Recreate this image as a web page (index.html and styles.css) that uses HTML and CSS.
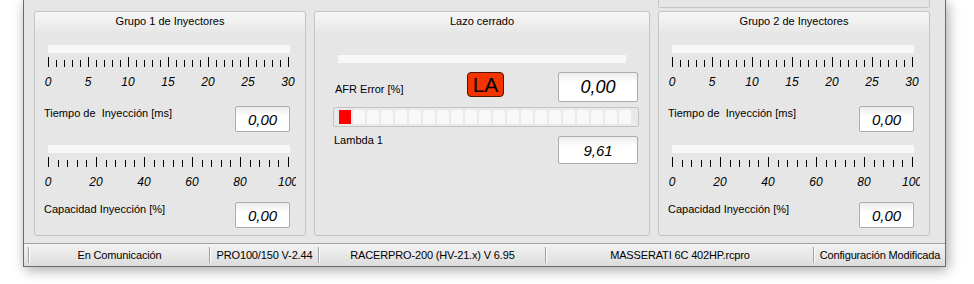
FILE: index.html
```html
<!DOCTYPE html>
<html lang="es">
<head>
<meta charset="utf-8">
<title>Inyección</title>
<link rel="stylesheet" href="styles.css">
</head>
<body>
<div class="window">
  <div class="topstrip"><div class="topbox"></div></div>
  <div class="groups">
    <section class="group">
      <div class="gtitle">Grupo 1 de Inyectores</div>
      <div class="gauge">
        <div class="gbar"></div>
        <svg class="ticks" width="241" height="10" viewBox="0 0 241 10">
          <path d="M8.5 3v7M16.5 3v7M24.5 3v7M32.5 3v7M48.5 3v7M56.5 3v7M64.5 3v7M72.5 3v7M88.5 3v7M96.5 3v7M104.5 3v7M112.5 3v7M128.5 3v7M136.5 3v7M144.5 3v7M152.5 3v7M168.5 3v7M176.5 3v7M184.5 3v7M192.5 3v7M208.5 3v7M216.5 3v7M224.5 3v7M232.5 3v7M0.5 0v10M40.5 0v10M80.5 0v10M120.5 0v10M160.5 0v10M200.5 0v10M240.5 0v10"/>
        </svg>
        <div class="scale s30"><span>0</span><span>5</span><span>10</span><span>15</span><span>20</span><span>25</span><span>30</span></div>
      </div>
      <div class="vrow"><span class="vlabel">Tiempo de&nbsp; Inyección [ms]</span><div class="vbox">0,00</div></div>
      <div class="gauge second">
        <div class="gbar"></div>
        <svg class="ticks" width="241" height="10" viewBox="0 0 241 10">
          <path d="M10.5 3v7M19.5 3v7M29.5 3v7M38.5 3v7M58.5 3v7M67.5 3v7M77.5 3v7M86.5 3v7M106.5 3v7M115.5 3v7M125.5 3v7M134.5 3v7M154.5 3v7M163.5 3v7M173.5 3v7M182.5 3v7M202.5 3v7M211.5 3v7M221.5 3v7M230.5 3v7M0.5 0v10M48.5 0v10M96.5 0v10M144.5 0v10M192.5 0v10M240.5 0v10"/>
        </svg>
        <div class="scale s100"><span>0</span><span>20</span><span>40</span><span>60</span><span>80</span><span>100</span></div>
      </div>
      <div class="vrow second"><span class="vlabel">Capacidad Inyección [%]</span><div class="vbox">0,00</div></div>
    </section>

    <section class="center">
      <div class="gtitle">Lazo cerrado</div>
      <div class="cbar"></div>
      <div class="afrrow">
        <span class="vlabel afrlabel">AFR Error [%]</span>
        <div class="badge">LA</div>
        <span></span>
        <div class="vbox big">0,00</div>
      </div>
      <div class="segbar">
        <i class="seg on"></i><i class="seg"></i><i class="seg"></i><i class="seg"></i><i class="seg"></i><i class="seg"></i><i class="seg"></i><i class="seg"></i><i class="seg"></i><i class="seg"></i><i class="seg"></i><i class="seg"></i><i class="seg"></i><i class="seg"></i><i class="seg"></i><i class="seg"></i><i class="seg"></i><i class="seg"></i><i class="seg"></i><i class="seg"></i><i class="seg"></i>
      </div>
      <div class="lrow">
        <span class="vlabel">Lambda 1</span>
        <div class="vbox mid">9,61</div>
      </div>
    </section>

    <section class="group">
      <div class="gtitle">Grupo 2 de Inyectores</div>
      <div class="gauge">
        <div class="gbar"></div>
        <svg class="ticks" width="241" height="10" viewBox="0 0 241 10">
          <path d="M8.5 3v7M16.5 3v7M24.5 3v7M32.5 3v7M48.5 3v7M56.5 3v7M64.5 3v7M72.5 3v7M88.5 3v7M96.5 3v7M104.5 3v7M112.5 3v7M128.5 3v7M136.5 3v7M144.5 3v7M152.5 3v7M168.5 3v7M176.5 3v7M184.5 3v7M192.5 3v7M208.5 3v7M216.5 3v7M224.5 3v7M232.5 3v7M0.5 0v10M40.5 0v10M80.5 0v10M120.5 0v10M160.5 0v10M200.5 0v10M240.5 0v10"/>
        </svg>
        <div class="scale s30"><span>0</span><span>5</span><span>10</span><span>15</span><span>20</span><span>25</span><span>30</span></div>
      </div>
      <div class="vrow"><span class="vlabel">Tiempo de&nbsp; Inyección [ms]</span><div class="vbox">0,00</div></div>
      <div class="gauge second">
        <div class="gbar"></div>
        <svg class="ticks" width="241" height="10" viewBox="0 0 241 10">
          <path d="M10.5 3v7M19.5 3v7M29.5 3v7M38.5 3v7M58.5 3v7M67.5 3v7M77.5 3v7M86.5 3v7M106.5 3v7M115.5 3v7M125.5 3v7M134.5 3v7M154.5 3v7M163.5 3v7M173.5 3v7M182.5 3v7M202.5 3v7M211.5 3v7M221.5 3v7M230.5 3v7M0.5 0v10M48.5 0v10M96.5 0v10M144.5 0v10M192.5 0v10M240.5 0v10"/>
        </svg>
        <div class="scale s100"><span>0</span><span>20</span><span>40</span><span>60</span><span>80</span><span>100</span></div>
      </div>
      <div class="vrow second"><span class="vlabel">Capacidad Inyección [%]</span><div class="vbox">0,00</div></div>
    </section>
  </div>

  <div class="status">
    <i class="sep"></i><span class="panel p1">En Comunicación</span>
    <i class="sep"></i><span class="panel p2">PRO100/150 V-2.44</span>
    <i class="sep"></i><span class="panel p3">RACERPRO-200 (HV-21.x) V 6.95</span>
    <i class="sep"></i><span class="panel p4">MASSERATI 6C 402HP.rcpro</span>
    <i class="sep"></i><span class="panel p5">Configuración Modificada</span>
  </div>
</div>
</body>
</html>
```

FILE: styles.css
```css
* { box-sizing: border-box; }
html, body { margin: 0; padding: 0; }
body {
  background: #ffffff;
  width: 974px;
  height: 284px;
  overflow: hidden;
  font-family: "Liberation Sans", Arial, sans-serif;
  font-size: 11px;
  color: #000;
}

.window {
  margin-left: 23px;
  width: 923px;
  height: 267px;
  background: #e6e6e6;
  border: 1px solid #6b6b6b;
  border-top: 0;
  box-shadow: 2px 3px 12px rgba(0, 0, 0, 0.35);
  display: flex;
  flex-direction: column;
}

.topstrip { height: 11px; padding-left: 634px; flex: none; }
.topbox {
  width: 272px;
  height: 8px;
  border: 1px solid #c4c4c4;
  border-top: 0;
  border-radius: 0 0 2px 2px;
}

.groups {
  display: flex;
  gap: 8px;
  padding-left: 10px;
  height: 225px;
  flex: none;
}

.group, .center {
  height: 225px;
  border: 1px solid #c4c4c4;
  border-radius: 3px;
  background: linear-gradient(#f7f7f7, #e6e6e6 22px);
}
.group { width: 272px; }
.center { width: 336px; }

.gtitle {
  padding-top: 3px;
  height: 16px;
  line-height: 13px;
  text-align: center;
}

.gauge {
  margin: 17px 0 0 3px;
  width: 258px;
  padding-left: 10px;
  overflow: hidden;
}
.gauge.second { margin-top: 13px; }
.gbar { width: 242px; height: 8px; background: #f7f9f9; }
.ticks { display: block; margin-top: 4px; shape-rendering: crispEdges; }
.ticks path { stroke: #000; stroke-width: 1; fill: none; }

.scale {
  display: flex;
  margin-top: 8px;
  height: 14px;
  line-height: 14px;
  font-style: italic;
  font-size: 12px;
}
.scale.s30 { gap: 40px; }
.scale.s100 { gap: 48px; }
.scale span {
  width: 0;
  display: flex;
  justify-content: center;
  white-space: nowrap;
}

.vrow {
  margin-top: 17px;
  display: flex;
  align-items: flex-start;
  padding-left: 9px;
  height: 26px;
}
.vrow.second { margin-top: 13px; }
.vlabel { margin-top: 1px; line-height: 13px; white-space: nowrap; }

.vbox {
  margin-left: auto;
  margin-right: 15px;
  width: 55px;
  height: 26px;
  border: 1px solid #adadad;
  border-radius: 2px;
  background: linear-gradient(#ececec, #ffffff 9px);
  font-style: italic;
  font-size: 15px;
  display: flex;
  align-items: center;
  justify-content: center;
}

.cbar {
  margin: 27px 0 0 23px;
  width: 288px;
  height: 8px;
  background: #f7f9f9;
}

.afrrow {
  margin-top: 9px;
  display: grid;
  grid-template-columns: 132px 37px 54px 80px;
  padding-left: 20px;
  height: 30px;
}
.afrlabel { margin-top: 11px; }
.badge {
  width: 37px;
  height: 25px;
  background: #f33400;
  border: 1px solid #4e1500;
  border-radius: 4px;
  font-size: 21px;
  line-height: 23px;
  text-align: center;
  color: #000;
}
.vbox.big {
  margin: 0;
  width: 80px;
  height: 30px;
  font-size: 18px;
}

.segbar {
  margin: 5px 0 0 18px;
  width: 306px;
  height: 20px;
  border: 1px solid #c4c4c4;
  border-radius: 2px;
  padding: 2px 7px 2px 5px;
  display: flex;
  gap: 2px;
  background: #e9e9e9;
}
.seg { display: block; width: 12px; height: 14px; background: #f7f9f9; }
.seg.on { background: #ff0000; }

.lrow {
  margin-top: 7px;
  display: grid;
  grid-template-columns: 224px 80px;
  padding-left: 19px;
}
.lrow .vlabel { margin-top: 0; }
.vbox.mid {
  margin: 2px 0 0 0;
  width: 80px;
  height: 28px;
  font-size: 15px;
}

.status {
  margin-top: 7px;
  height: 23px;
  flex: none;
  border-top: 1px solid #a3a3a3;
  background: linear-gradient(#f3f3f3, #dcdcdc);
  display: flex;
  align-items: center;
  padding-left: 4px;
}
.sep {
  display: block;
  flex: none;
  width: 2px;
  height: 16px;
  border-left: 1px solid #a0a0a0;
  border-right: 1px solid #ffffff;
}
.panel { text-align: center; white-space: nowrap; flex: none; letter-spacing: -0.15px; }
.p1 { width: 179px; }
.p2 { width: 107px; }
.p3 { width: 225px; }
.p4 { width: 266px; }
.p5 { flex: 1; }
```
